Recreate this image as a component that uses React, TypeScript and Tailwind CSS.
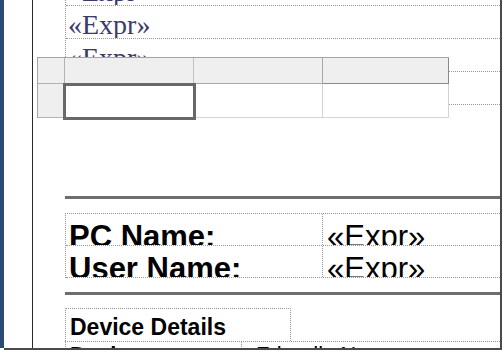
export default function App() {
  const serifRow =
    "h-[33px] shrink-0 border-b border-dotted border-[#9a9a9a] overflow-hidden pl-[2px] pt-[5px] text-[28px] leading-none text-[#3b3a6c] font-['Liberation_Serif',serif] whitespace-nowrap";
  return (
    <div className="w-[504px] h-[354px] bg-white overflow-hidden">
      <div className="flex h-[348px]">
        <div className="w-[4px] shrink-0 bg-[#2b4b77]" />
        <div className="w-[28px] shrink-0 bg-white" />
        <div className="w-[1px] shrink-0 bg-[#2a2a2a]" />
        <div className="relative w-[467px] shrink-0 h-full overflow-hidden bg-white">
          <div className="pl-[32px] flex flex-col">
            {/* top text boxes */}
            <div className="-mt-[27px] flex flex-col border-l border-dotted border-[#9a9a9a]">
              <div className={serifRow}>«Expr»</div>
              <div className={serifRow}>«Expr»</div>
              <div className={serifRow}>«Expr»</div>
              <div className={serifRow}>«Expr»</div>
            </div>

            {/* thick line */}
            <div className="mt-[91px] h-[3px] bg-[#6e6e6e]" />

            {/* PC / User name box */}
            <div className="mt-[14px] flex flex-col border-t border-l border-dotted border-[#9a9a9a] font-['Liberation_Sans',Arial,sans-serif] text-black">
              <div className="h-[32px] flex border-b border-dotted border-[#9a9a9a] overflow-hidden">
                <div className="w-[257px] shrink-0 border-r border-dotted border-[#9a9a9a] pl-[3px] pt-[7px] text-[31px] leading-none font-bold whitespace-nowrap overflow-hidden">
                  PC Name:
                </div>
                <div className="pl-[4px] pt-[7px] text-[31px] leading-none whitespace-nowrap">«Expr»</div>
              </div>
              <div className="h-[32px] flex border-b border-dotted border-[#9a9a9a] overflow-hidden">
                <div className="w-[257px] shrink-0 border-r border-dotted border-[#9a9a9a] pl-[3px] pt-[7px] text-[31px] leading-none font-bold whitespace-nowrap overflow-hidden">
                  User Name:
                </div>
                <div className="pl-[4px] pt-[7px] text-[31px] leading-none whitespace-nowrap">«Expr»</div>
              </div>
            </div>

            {/* thick line */}
            <div className="mt-[14px] h-[3px] bg-[#6e6e6e]" />

            {/* Device Details */}
            <div className="mt-[13px] w-[226px] h-[33px] border-t border-l border-r border-dotted border-[#9a9a9a] pl-[4px] pt-[7px] text-[23px] leading-none font-bold text-black font-['Liberation_Sans',Arial,sans-serif] whitespace-nowrap overflow-hidden">
              Device Details
            </div>
            <div className="h-[30px] flex border-t border-l border-dotted border-[#9a9a9a] font-['Liberation_Sans',Arial,sans-serif] text-black">
              <div className="w-[176px] shrink-0 border-r border-dotted border-[#9a9a9a] pl-[4px] pt-[2px] text-[22px] leading-none font-bold whitespace-nowrap overflow-hidden">
                Device
              </div>
              <div className="pl-[14px] pt-[2px] text-[22px] leading-none whitespace-nowrap">Friendly Name</div>
            </div>
          </div>

          {/* table being edited (overlay) */}
          <div className="absolute left-[4px] top-[57px] w-[412px] h-[61px] grid grid-cols-[27px_129px_129px_126px] grid-rows-[26px_34px] border-t border-l border-[#a4a4a4]">
            <div className="bg-[#efefef] border-r border-b border-[#b2b2b2]" />
            <div className="bg-[#efefef] border-r border-b border-[#c2c2c2]" />
            <div className="bg-[#efefef] border-r border-b border-[#a8a8a8]" />
            <div className="bg-[#efefef] border-r border-b border-[#8a8a8a]" />
            <div className="bg-[#efefef] border-r border-b border-[#b2b2b2]" />
            <div className="bg-white border-r border-b border-[#d4d4d4]" />
            <div className="bg-white border-r border-b border-[#d4d4d4]" />
            <div className="bg-white border-r border-b border-[#d4d4d4]" />
            <div className="absolute left-[25px] top-[25px] w-[133px] h-[37px] border-[3px] border-[#686868]" />
          </div>
        </div>
        <div className="w-[2px] shrink-0 bg-[#4a4a4a]" />
      </div>
      <div className="ml-[4px] w-[498px] h-[2px] bg-[#4a4a4a]" />
    </div>
  );
}
